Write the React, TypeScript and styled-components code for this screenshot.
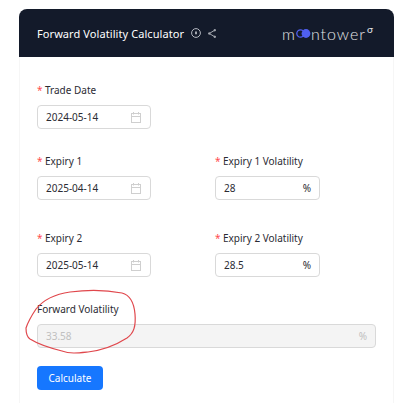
import styled, { createGlobalStyle } from "styled-components";

const GlobalStyle = createGlobalStyle`
  html, body {
    margin: 0;
    padding: 0;
    background: #ffffff;
  }
  * {
    box-sizing: border-box;
  }
`;

function CalendarIcon() {
  return (
    <svg width="10" height="11" viewBox="0 0 10 11" fill="none" stroke="#cfcfcf" strokeWidth="1">
      <rect x="0.5" y="1.5" width="9" height="9" />
      <path d="M0.5 4.5h9M2.5 0v2.5M7.5 0v2.5" />
    </svg>
  );
}

interface FieldProps {
  label: string;
  value: string;
}

function DateField({ label, value }: FieldProps) {
  return (
    <Field>
      <Label><Star>*</Star>{label}</Label>
      <DateBox>
        <span>{value}</span>
        <CalendarIcon />
      </DateBox>
    </Field>
  );
}

function PercentField({ label, value }: FieldProps) {
  return (
    <Field>
      <Label><Star>*</Star>{label}</Label>
      <PercentBox>
        <span>{value}</span>
        <span>%</span>
      </PercentBox>
    </Field>
  );
}

export default function App() {
  return (
    <Page>
      <GlobalStyle />
      <Card>
        <Header>
          <TitleGroup>
            <Title>Forward Volatility Calculator</Title>
            <svg width="10" height="10" viewBox="0 0 10 10" fill="none" stroke="#b4b8c0">
              <circle cx="5" cy="5" r="4.4" />
              <path d="M5 3.4v2.8" strokeWidth="1.8" />
            </svg>
            <svg width="8" height="9" viewBox="0 0 8 9" fill="#a4a8b0" stroke="#a4a8b0" strokeWidth="1">
              <path d="M6.8 1.2L1.2 4.5L6.8 7.8" fill="none" />
              <circle cx="1.2" cy="4.5" r="0.8" />
              <circle cx="6.8" cy="1.2" r="0.8" />
              <circle cx="6.8" cy="7.8" r="0.8" />
            </svg>
          </TitleGroup>
          <Logo>
            m
            <svg width="15" height="9" viewBox="0 0 15 9">
              <circle cx="4.5" cy="4.5" r="3.7" fill="none" stroke="#4f5ff0" strokeWidth="1.3" />
              <circle cx="10" cy="4.5" r="4.4" fill="#4f5ff0" />
            </svg>
            ntower
            <Sigma>σ</Sigma>
          </Logo>
        </Header>
        <Body>
          <FirstRow>
            <DateField label="Trade Date" value="2024-05-14" />
          </FirstRow>
          <Row>
            <DateField label="Expiry 1" value="2025-04-14" />
            <PercentField label="Expiry 1 Volatility" value="28" />
          </Row>
          <MiddleRow>
            <DateField label="Expiry 2" value="2025-05-14" />
            <PercentField label="Expiry 2 Volatility" value="28.5" />
          </MiddleRow>
          <ResultRow>
            <Field>
              <Label>Forward Volatility</Label>
              <DisabledBox>
                <span>33.58</span>
                <span>%</span>
              </DisabledBox>
            </Field>
          </ResultRow>
          <CalculateButton type="button">Calculate</CalculateButton>
        </Body>
      </Card>
      <Scribble width="405" height="403" viewBox="0 0 405 403" fill="none">
        <path d="M36 309C44 299 56 294 70 292C86 290 106 290 122 293C130 295 134 303 135 314C136 326 134 333 127 338C116 345 104 350 88 352C78 353 70 354 62 351C50 348 38 344 30 339C27 337 26 334 26 328C28 322 32 315 36 309Z" stroke="#e0474c" strokeWidth="1.2" />
      </Scribble>
    </Page>
  );
}

const Page = styled.div`
  position: relative;
  width: 405px;
  height: 403px;
  padding: 9px 11px 0 19px;
  overflow: hidden;
  font-family: "Noto Sans", "Open Sans", sans-serif;
`;

const Card = styled.div`
  height: 400px;
  border: 1px solid #f6f6f6;
  border-top: 0;
  border-radius: 8px 8px 0 0;
`;

const Header = styled.header`
  display: flex;
  align-items: center;
  justify-content: space-between;
  height: 48px;
  margin: 0 -1px;
  padding: 0 21px 0 18px;
  background: #131a2a;
  border-radius: 8px 8px 0 0;
`;

const TitleGroup = styled.div`
  display: flex;
  align-items: center;
  gap: 7px;
`;

const Title = styled.h1`
  margin: 0;
  font-size: 11px;
  font-weight: 400;
  letter-spacing: 0.08px;
  color: #ffffff;
`;

const Logo = styled.div`
  display: flex;
  align-items: center;
  font-family: "Lato", sans-serif;
  font-size: 16px;
  font-weight: 300;
  letter-spacing: 1px;
  color: #e4e4e6;
`;

const Sigma = styled.span`
  font-size: 10px;
  font-weight: 400;
  letter-spacing: 0;
  margin: -8px 0 0 1px;
`;

const Body = styled.div`
  padding: 23px 17px 0;
`;

const Row = styled.div`
  display: flex;
  gap: 64px;
  margin-top: 22px;
`;

const FirstRow = styled(Row)`
  margin-top: 0;
`;

const MiddleRow = styled(Row)`
  margin-top: 28px;
`;

const ResultRow = styled(Row)`
  margin-top: 22px;
`;

const Field = styled.div`
  display: flex;
  flex-direction: column;
  flex: 0 0 auto;
  gap: 6px;
`;

const Label = styled.label`
  display: block;
  height: 19px;
  font-size: 10px;
  line-height: 21px;
  color: #2b2b33;
  white-space: nowrap;
`;

const Star = styled.span`
  display: inline-block;
  width: 8px;
  color: #ff4d4f;
`;

const Box = styled.div`
  display: flex;
  align-items: center;
  justify-content: space-between;
  height: 24px;
  padding: 0 8px;
  border: 1px solid #d9d9d9;
  border-radius: 4px;
  font-size: 10px;
  color: #2b2b33;
`;

const DateBox = styled(Box)`
  width: 114px;
  padding-right: 9px;
`;

const PercentBox = styled(Box)`
  width: 105px;
`;

const DisabledBox = styled(Box)`
  width: 339px;
  background: #f4f4f4;
  color: #c0c0c0;
`;

const CalculateButton = styled.button`
  display: block;
  width: 66px;
  height: 24px;
  margin-top: 18px;
  padding: 0;
  border: 0;
  border-radius: 4px;
  background: #1677ff;
  color: #ffffff;
  font-family: inherit;
  font-size: 10px;
`;

const Scribble = styled.svg`
  position: absolute;
  top: 0;
  left: 0;
  pointer-events: none;
`;
